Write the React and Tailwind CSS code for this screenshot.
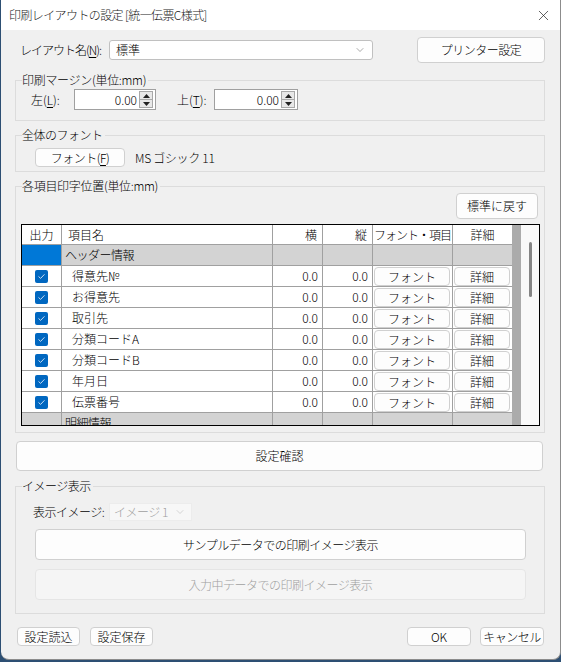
import { X, ChevronDown } from 'lucide-react'

const rows = ['得意先№', 'お得意先', '取引先', '分類コードA', '分類コードB', '年月日', '伝票番号']

function Spinner() {
  return (
    <div className="w-[14px] h-[17px] border border-[#a8a8a8] bg-[#e8e8e8] flex flex-col">
      <div className="flex-1 flex items-center justify-center border-b border-[#a8a8a8]">
        <svg width="7" height="4" viewBox="0 0 7 4"><path d="M0 4L3.5 0L7 4Z" fill="#222" /></svg>
      </div>
      <div className="flex-1 flex items-center justify-center">
        <svg width="7" height="4" viewBox="0 0 7 4"><path d="M0 0L3.5 4L7 0Z" fill="#222" /></svg>
      </div>
    </div>
  )
}

function NumInput({ w }) {
  return (
    <div className={`${w} h-[21px] bg-white border border-[#a0a0a0] flex items-center justify-end pr-[2px]`}>
      <span className="text-[12px] leading-none mr-[2px]">0.00</span>
      <Spinner />
    </div>
  )
}

function Btn({ className = '', children, disabled }) {
  return (
    <button
      className={`flex items-center justify-center rounded-[4px] border text-[12px] leading-none whitespace-nowrap ${disabled ? 'bg-[#f5f5f5] border-[#e5e5e5] text-[#a0a0a0]' : 'bg-[#fdfdfd] border-[#d0d0d0] text-black'} ${className}`}
    >
      {children}
    </button>
  )
}

function Check() {
  return (
    <div className="w-[13px] h-[13px] rounded-[2px] bg-[#0067c0] flex items-center justify-center">
      <svg width="9" height="9" viewBox="0 0 9 9" fill="none">
        <path d="M1.8 4.7L3.6 6.4L7.2 2.6" stroke="#c7dcf2" strokeWidth="1" strokeLinecap="round" strokeLinejoin="round" />
      </svg>
    </div>
  )
}

function GroupRow({ label, selected }) {
  return (
    <div className="flex h-[21px] shrink-0 border-b border-[#a0a0a0] bg-[#d3d3d3] text-[12px]">
      <div className={`w-[40px] border-r border-[#a0a0a0] ${selected ? 'bg-[#0078d7]' : ''}`} />
      <div className="w-[211px] border-r border-[#a0a0a0] pl-[3px] flex items-center tracking-[-0.5px]">{label}</div>
      <div className="w-[50px] border-r border-[#a0a0a0]" />
      <div className="w-[50px] border-r border-[#a0a0a0]" />
      <div className="w-[80px] border-r border-[#a0a0a0]" />
      <div className="w-[59px]" />
    </div>
  )
}

function ItemRow({ name }) {
  return (
    <div className="flex h-[21px] shrink-0 border-b border-[#a0a0a0] bg-white text-[12px]">
      <div className="w-[40px] border-r border-[#a0a0a0] flex items-center justify-center">
        <Check />
      </div>
      <div className="w-[211px] border-r border-[#a0a0a0] pl-[10px] flex items-center">{name}</div>
      <div className="w-[50px] border-r border-[#a0a0a0] pr-[4px] flex items-center justify-end">0.0</div>
      <div className="w-[50px] border-r border-[#a0a0a0] pr-[4px] flex items-center justify-end">0.0</div>
      <div className="w-[80px] border-r border-[#a0a0a0] pl-[1px] pt-px">
        <Btn className="w-[76px] h-[19px]">フォント</Btn>
      </div>
      <div className="w-[59px] pl-px pt-px">
        <Btn className="w-[56px] h-[19px]">詳細</Btn>
      </div>
    </div>
  )
}

export default function App() {
  return (
    <div className="w-[561px] h-[662px] bg-[#2d4f73] font-['Noto_Sans_CJK_JP','Noto_Sans',sans-serif] font-light text-black overflow-hidden">
      <div className="ml-px w-[560px] h-[660px] bg-[#f0f0f0] border-r border-b border-[#8c8c8c] rounded-b-[8px] overflow-hidden flex flex-col">
        {/* Title bar */}
        <div className="h-[30px] bg-white flex items-center justify-between pl-[8px] pr-[8px] shrink-0">
          <span className="text-[12px] tracking-[-0.6px] text-[#1a1a1a]">印刷レイアウトの設定 [統一伝票C様式]</span>
          <X size={17} strokeWidth={1} color="#222" />
        </div>

        <div className="pl-[14px] pr-[15px] flex flex-col text-[12px]">
          {/* Layout name */}
          <div className="mt-[7px] h-[26px] flex items-center">
            <span className="ml-[5px] w-[89px] tracking-[-1px] whitespace-nowrap">
              レイアウト名(<span className="underline underline-offset-2">N</span>):
            </span>
            <div className="w-[264px] h-[20px] bg-white border border-[#c0c0c0] rounded-[3px] flex items-center justify-between pl-[6px] pr-[6px]">
              <span>標準</span>
              <ChevronDown size={12} strokeWidth={1} color="#555" />
            </div>
            <Btn className="ml-auto w-[128px] h-[26px] tracking-[-0.5px]">プリンター設定</Btn>
          </div>

          {/* Margin */}
          <fieldset className="mt-[10px] border border-[#dcdcdc] px-0 pt-[2px] pb-[10px]">
            <legend className="ml-[6px] pr-[2px] leading-[14px] tracking-[-0.3px]">印刷マージン(単位:mm)</legend>
            <div className="flex items-center h-[21px]">
              <span className="ml-[15px] w-[43px]">
                左(<span className="underline underline-offset-2">L</span>):
              </span>
              <NumInput w="w-[82px]" />
              <span className="ml-[21px] w-[37px]">
                上(<span className="underline underline-offset-2">T</span>):
              </span>
              <NumInput w="w-[84px]" />
            </div>
          </fieldset>

          {/* Whole font */}
          <fieldset className="mt-[7px] border border-[#dcdcdc] px-0 pt-[6px] pb-[4px]">
            <legend className="ml-[6px] pr-[2px] leading-[14px] tracking-[-0.5px]">全体のフォント</legend>
            <div className="flex items-center h-[19px]">
              <Btn className="ml-[19px] w-[90px] h-[19px] tracking-[-0.5px]">
                フォント(<span className="underline underline-offset-2">F</span>)
              </Btn>
              <span className="ml-[10px] tracking-[-0.3px]">MS ゴシック 11</span>
            </div>
          </fieldset>

          {/* Item positions */}
          <fieldset className="mt-[7px] border border-[#dcdcdc] px-0 pb-[6px]">
            <legend className="ml-[6px] pr-[2px] leading-[14px] tracking-[-0.3px]">各項目印字位置(単位:mm)</legend>
            <div className="flex justify-end pr-[6px]">
              <Btn className="w-[82px] h-[26px]">標準に戻す</Btn>
            </div>
            <div className="mt-[5px] ml-[5px] w-[519px] h-[202px] border border-black flex overflow-hidden">
              <div className="w-[490px] flex flex-col overflow-hidden">
                <div className="flex h-[20px] shrink-0 border-b border-[#a0a0a0] bg-white text-[12px]">
                  <div className="w-[40px] border-r border-[#a0a0a0] flex items-center justify-center">出力</div>
                  <div className="w-[211px] border-r border-[#a0a0a0] pl-[6px] flex items-center">項目名</div>
                  <div className="w-[50px] border-r border-[#a0a0a0] pr-[5px] flex items-center justify-end">横</div>
                  <div className="w-[50px] border-r border-[#a0a0a0] pr-[5px] flex items-center justify-end">縦</div>
                  <div className="w-[80px] border-r border-[#a0a0a0] flex items-center justify-center whitespace-nowrap tracking-[-1px]">フォント・項目</div>
                  <div className="w-[59px] flex items-center justify-center">詳細</div>
                </div>
                <GroupRow label="ヘッダー情報" selected />
                {rows.map((r) => (
                  <ItemRow key={r} name={r} />
                ))}
                <GroupRow label="明細情報" />
              </div>
              <div className="w-[9px] bg-[#ababab]" />
              <div className="w-[18px] bg-[#f9f9f9]">
                <div className="mt-[17px] ml-[8px] w-[3px] h-[55px] rounded-full bg-[#858585]" />
              </div>
            </div>
          </fieldset>

          {/* Confirm */}
          <Btn className="mt-[8px] ml-px w-[527px] h-[30px]">設定確認</Btn>

          {/* Image display */}
          <fieldset className="mt-[8px] border border-[#dcdcdc] px-0 pb-[13px]">
            <legend className="ml-[6px] pr-[2px] leading-[14px] tracking-[-0.5px]">イメージ表示</legend>
            <div className="mt-[10px] h-[18px] flex items-center">
              <span className="ml-[17px] w-[76px] tracking-[-0.5px]">表示イメージ:</span>
              <div className="w-[83px] h-[18px] bg-[#f7f7f7] border border-[#ececec] flex items-center justify-between pl-[4px] pr-[5px] text-[#a0a0a0]">
                <span className="tracking-[-0.5px]">イメージ 1</span>
                <ChevronDown size={12} strokeWidth={1} color="#b0b0b0" />
              </div>
            </div>
            <Btn className="mt-[8px] ml-[19px] w-[491px] h-[31px] tracking-[-0.5px]">サンプルデータでの印刷イメージ表示</Btn>
            <Btn disabled className="mt-[9px] ml-[19px] w-[491px] h-[31px] tracking-[-0.5px]">入力中データでの印刷イメージ表示</Btn>
          </fieldset>

          {/* Footer buttons */}
          <div className="mt-[13px] h-[19px] flex items-center">
            <Btn className="ml-[2px] w-[63px] h-[19px]">設定読込</Btn>
            <Btn className="ml-[10px] w-[63px] h-[19px]">設定保存</Btn>
            <Btn className="ml-auto w-[64px] h-[19px]">OK</Btn>
            <Btn className="ml-[9px] mr-px w-[64px] h-[19px] tracking-[-0.5px]">キャンセル</Btn>
          </div>
        </div>
      </div>
    </div>
  )
}
